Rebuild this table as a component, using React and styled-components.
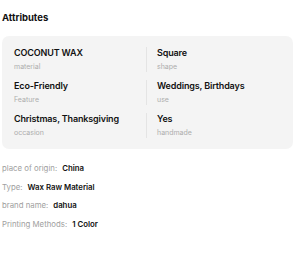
import React from "react";
import styled, { createGlobalStyle } from "styled-components";

const GlobalStyle = createGlobalStyle`
  html, body {
    margin: 0;
    padding: 0;
    background: #ffffff;
  }
  body {
    font-family: Inter, "Noto Sans", sans-serif;
    color: #222222;
  }
`;

const attributes = [
  { value: "COCONUT WAX", label: "material" },
  { value: "Square", label: "shape" },
  { value: "Eco-Friendly", label: "Feature" },
  { value: "Weddings, Birthdays", label: "use" },
  { value: "Christmas, Thanksgiving", label: "occasion" },
  { value: "Yes", label: "handmade" },
];

const details = [
  { name: "place of origin", value: "China" },
  { name: "Type", value: "Wax Raw Material" },
  { name: "brand name", value: "dahua" },
  { name: "Printing Methods", value: "1 Color" },
];

const Page = styled.div`
  width: 291px;
  padding: 11px 0 0 2px;
`;

const Title = styled.h3`
  margin: 0 0 11px;
  font-size: 9.5px;
  line-height: 14px;
  font-weight: 700;
  color: #111111;
`;

// two-column attribute grid, left cells carry the divider
const Card = styled.div`
  background: #f4f4f4;
  border-radius: 7px;
  padding: 11px 0 11px;
  display: grid;
  grid-template-columns: minmax(0, 145px) minmax(0, 1fr);
  row-gap: 8px;
`;

const Cell = styled.div`
  padding: 0 ${(p) => (p.$left ? "12px" : "10px")};
  border-right: ${(p) => (p.$left ? "1px solid #e4e4e4" : "none")};
  display: flex;
  flex-direction: column;
`;

const Value = styled.div`
  font-size: 9px;
  line-height: 12px;
  font-weight: 600;
  letter-spacing: -0.15px;
  color: #111111;
  white-space: nowrap;
`;

const Label = styled.div`
  font-size: 7px;
  line-height: 10px;
  color: #adadad;
  margin-top: 3px;
`;

const DetailList = styled.div`
  padding: 13px 0 0;
  display: flex;
  flex-direction: column;
  gap: 6.5px;
`;

const DetailRow = styled.div`
  font-size: 7.8px;
  line-height: 12px;
  color: #a0a0a0;
  white-space: nowrap;
`;

const DetailValue = styled.span`
  margin-left: 5px;
  color: #111111;
  font-weight: 600;
`;

export default function App() {
  return (
    <>
      <GlobalStyle />
      <Page>
        <Title>Attributes</Title>
        <Card>
          {attributes.map((a, i) => (
            <Cell key={a.label} $left={i % 2 === 0}>
              <Value>{a.value}</Value>
              <Label>{a.label}</Label>
            </Cell>
          ))}
        </Card>
        <DetailList>
          {details.map((d) => (
            <DetailRow key={d.name}>
              {d.name}:<DetailValue>{d.value}</DetailValue>
            </DetailRow>
          ))}
        </DetailList>
      </Page>
    </>
  );
}
